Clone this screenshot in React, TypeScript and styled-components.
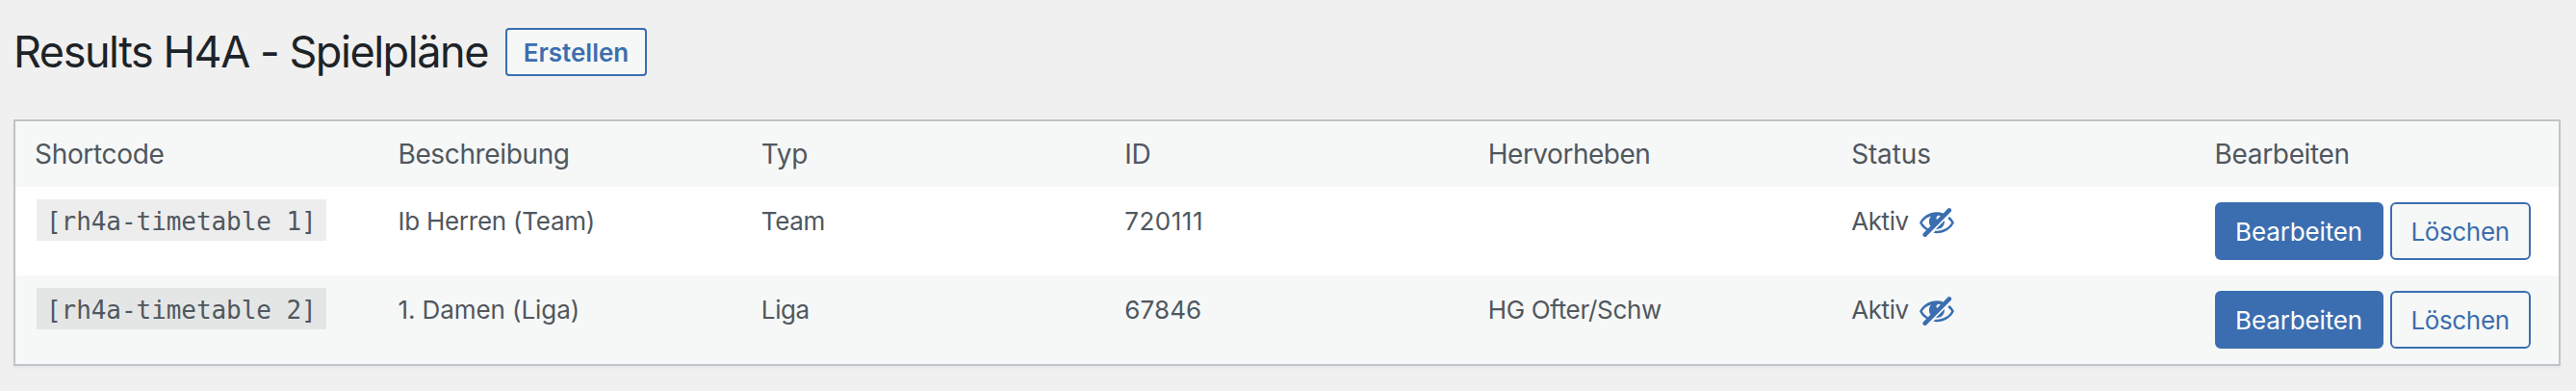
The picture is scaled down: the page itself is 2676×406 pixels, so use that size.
import React from "react";
import styled, { createGlobalStyle } from "styled-components";

const blue = "#3b6eb0";

const GlobalStyle = createGlobalStyle`
  * { box-sizing: border-box; }
  html { background: #f0f0f0; }
  body {
    margin: 0;
    background: #f0f0f0;
    color: #50575e;
    font-family: Inter, "Liberation Sans", sans-serif;
    font-size: 26px;
    line-height: 39px;
  }
`;

const Page = styled.main`
  min-height: 406px;
  padding: 29px 16px 0 14px;
`;

const PageHeader = styled.header`
  display: flex;
  align-items: center;
  height: 50px;
  margin-bottom: 45px;
`;

const Title = styled.h1`
  margin: 0;
  width: 511px;
  white-space: nowrap;
  color: #1d2327;
  font-size: 45px;
  font-weight: 400;
  line-height: 50px;
  letter-spacing: -1.45px;
`;

const CreateButton = styled.button`
  width: 147px;
  height: 50px;
  padding: 0;
  border: 2px solid ${blue};
  border-radius: 4px;
  background: #f6f8f7;
  color: ${blue};
  font: 600 26px/48px Inter, "Liberation Sans", sans-serif;
`;

const Table = styled.table`
  display: block;
  border: 2px solid #c2c3c8;
  background: #fff;
  box-shadow: 0 2px 2px rgba(0, 0, 0, 0.04);
`;

const Section = styled.tbody`
  display: block;
`;

const Row = styled.tr<{ $striped?: boolean }>`
  display: grid;
  grid-template-columns: repeat(7, minmax(0, 1fr));
  background: ${(p) => (p.$striped ? "#f6f8f7" : "#fff")};
`;

const HeadCell = styled.th<{ $tracking: number }>`
  height: 68px;
  padding: 16px 0 16px 20px;
  text-align: left;
  font-size: 28px;
  font-weight: 400;
  line-height: 36px;
  letter-spacing: ${(p) => p.$tracking}px;
`;

const Cell = styled.td<{ $tracking?: number }>`
  display: flex;
  align-items: flex-start;
  height: 92px;
  padding: 16px 0 16px 20px;
  white-space: nowrap;
  letter-spacing: ${(p) => p.$tracking ?? 0}px;
`;

const Shortcode = styled.code`
  height: 43px;
  margin: -3px 2px 0;
  padding: 3px 10px 0;
  background: rgba(0, 0, 0, 0.07);
  font-family: "DejaVu Sans Mono", monospace;
  font-size: 26px;
  line-height: 40px;
  letter-spacing: -0.06px;
`;

const HiddenIcon = styled.svg`
  width: 40px;
  height: 40px;
  margin-left: 9px;
  fill: ${blue};
`;

const ActionButton = styled.button<{ $primary?: boolean }>`
  width: ${(p) => (p.$primary ? 175 : 146)}px;
  height: 60px;
  margin-right: 7px;
  padding: 1px 0 0;
  border: 2px solid ${blue};
  border-radius: 6px;
  background: ${(p) => (p.$primary ? blue : "#f6f8f7")};
  color: ${(p) => (p.$primary ? "#fff" : blue)};
  font: 400 26px/56px Inter, "Liberation Sans", sans-serif;
  letter-spacing: ${(p) => (p.$primary ? -0.14 : -0.35)}px;
`;

const columns: [string, number][] = [
  ["Shortcode", -0.32],
  ["Beschreibung", -0.36],
  ["Typ", -0.3],
  ["ID", -0.3],
  ["Hervorheben", -0.48],
  ["Status", -0.14],
  ["Bearbeiten", -0.34],
];

const timetables = [
  {
    shortcode: "[rh4a-timetable 1]",
    description: { text: "Ib Herren (Team)", tracking: -0.25 },
    type: "Team",
    id: { text: "720111", tracking: 0.5 },
    highlight: "",
  },
  {
    shortcode: "[rh4a-timetable 2]",
    description: { text: "1. Damen (Liga)", tracking: -0.08 },
    type: "Liga",
    id: { text: "67846", tracking: 0.1 },
    highlight: "HG Ofter/Schw",
  },
];

const EyeSlash = () => (
  <HiddenIcon viewBox="0 0 20 20" aria-hidden="true">
    <path
      fillRule="evenodd"
      d="M17.2 3.3l.16.17c.39.39.39 1.02 0 1.41L4.55 17.7c-.39.39-1.03.39-1.41 0l-.17-.17c-.39-.39-.39-1.02 0-1.41l1.59-1.6c-1.57-1-2.76-2.3-3.56-3.93.81-1.65 2.03-2.98 3.64-3.99S8.04 5.09 10 5.09c1.2 0 2.33.21 3.4.6l2.38-2.39c.39-.39 1.03-.39 1.42 0zm-7.09 4.01c-.23.25-.34.54-.34.88 0 .31.12.58.31.81l1.8-1.79c-.13-.12-.28-.21-.45-.26-.11-.01-.28-.03-.49-.04-.33.03-.6.16-.83.4zM2.4 10.59c.69 1.23 1.71 2.25 3.05 3.05l1.28-1.28c-.51-.69-.77-1.47-.77-2.36 0-1.06.36-1.98 1.09-2.76-1.04.27-1.96.7-2.76 1.26-.8.58-1.43 1.27-1.89 2.09z"
    />
    <path d="M15.62 8.46l.96-.96c1.02.86 1.83 1.89 2.42 3.09-.81 1.65-2.03 2.98-3.64 3.99s-3.4 1.51-5.36 1.51c-.63 0-1.24-.07-1.83-.18l1.07-1.07c.25.02.5.05.76.05 1.63 0 3.13-.4 4.5-1.21s2.4-1.84 3.1-3.09c-.46-.82-1.09-1.51-1.89-2.09-.03-.01-.06-.03-.09-.04z" />
    <path d="M13.98 9.46A4.02 4.02 0 0 1 9.46 13.98z" />
  </HiddenIcon>
);

export default function App() {
  return (
    <Page>
      <GlobalStyle />
      <PageHeader>
        <Title>Results H4A - Spielpläne</Title>
        <CreateButton>Erstellen</CreateButton>
      </PageHeader>
      <Table>
        <Section as="thead">
          <Row $striped>
            {columns.map(([label, tracking]) => (
              <HeadCell key={label} $tracking={tracking}>
                {label}
              </HeadCell>
            ))}
          </Row>
        </Section>
        <Section>
          {timetables.map((t, i) => (
            <Row key={t.shortcode} $striped={i % 2 === 1}>
              <Cell>
                <Shortcode>{t.shortcode}</Shortcode>
              </Cell>
              <Cell $tracking={t.description.tracking}>{t.description.text}</Cell>
              <Cell $tracking={-0.4}>{t.type}</Cell>
              <Cell $tracking={t.id.tracking}>{t.id.text}</Cell>
              <Cell $tracking={-0.33}>{t.highlight}</Cell>
              <Cell $tracking={-0.4}>
                Aktiv
                <EyeSlash />
              </Cell>
              <Cell>
                <ActionButton $primary>Bearbeiten</ActionButton>
                <ActionButton>Löschen</ActionButton>
              </Cell>
            </Row>
          ))}
        </Section>
      </Table>
    </Page>
  );
}
